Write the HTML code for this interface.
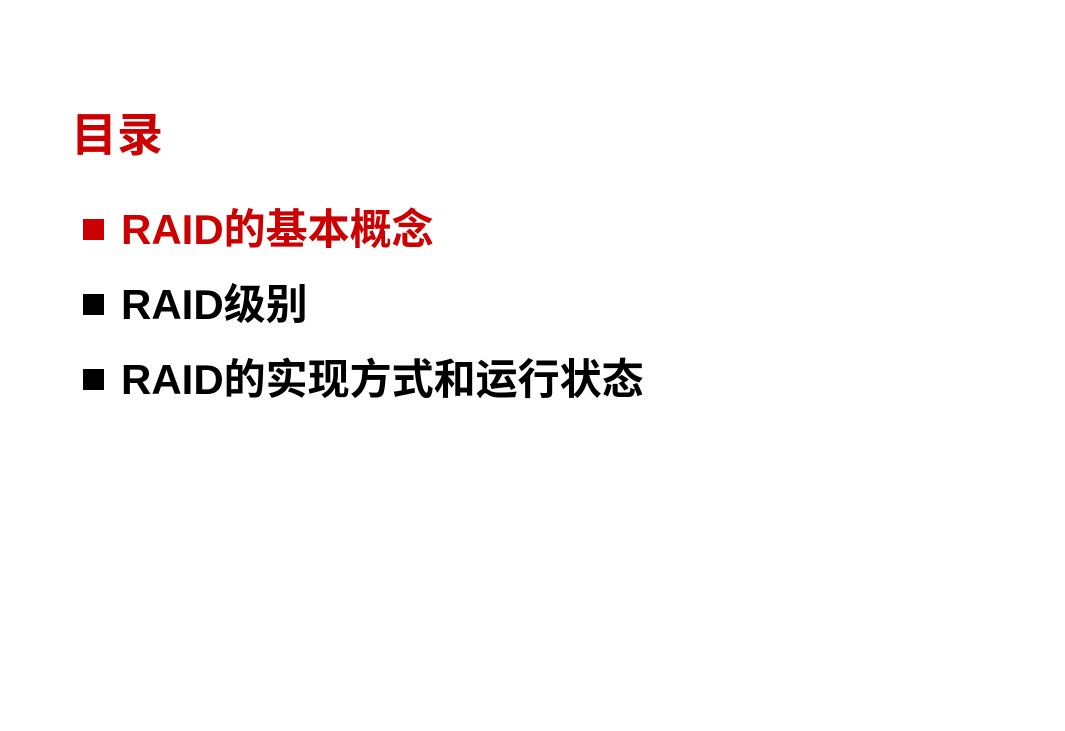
<!DOCTYPE html>
<html><head><meta charset="utf-8"><style>
body{margin:0;width:1065px;height:731px;background:#fff;overflow:hidden;position:relative;font-family:"Liberation Sans","Noto Sans CJK SC",sans-serif;font-weight:bold;}
.t{position:absolute;left:71px;top:107px;font-size:46px;color:#cc0000;line-height:56px;}
.i{position:absolute;left:121px;font-size:42px;line-height:50px;color:#000;white-space:nowrap;}
.b{position:absolute;left:83px;width:21px;height:21px;background:#000;}
.r{color:#cc0000}.rb{background:#cc0000}
</style></head><body>
<div class="t">目录</div>
<div class="b rb" style="top:219px"></div><div class="i r" style="top:205px">RAID的基本概念</div>
<div class="b" style="top:294px"></div><div class="i" style="top:280px">RAID级别</div>
<div class="b" style="top:369px"></div><div class="i" style="top:355px">RAID的实现方式和运行状态</div>
</body></html>
